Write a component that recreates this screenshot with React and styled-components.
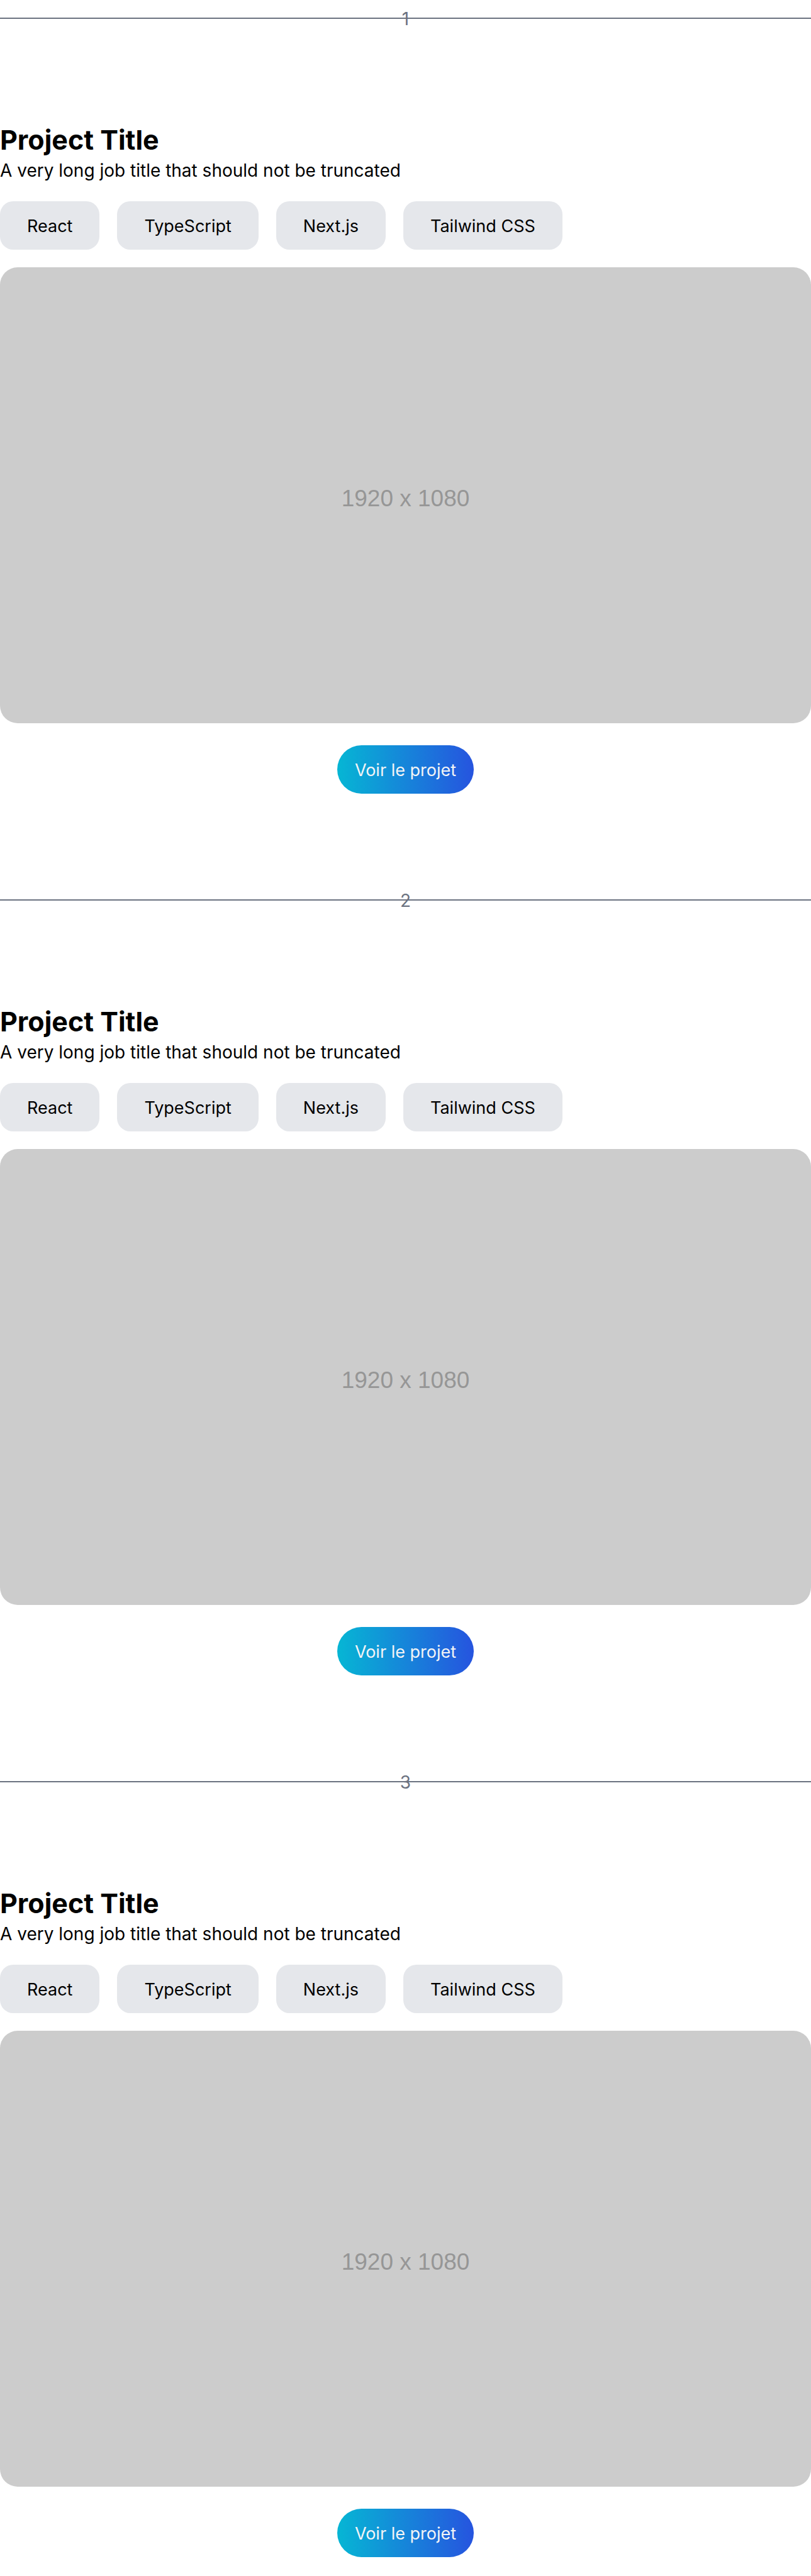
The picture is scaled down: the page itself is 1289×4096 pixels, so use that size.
import React from 'react';
import styled, { createGlobalStyle } from 'styled-components';

const GlobalStyle = createGlobalStyle`
  *, *::before, *::after { box-sizing: border-box; }
  body {
    margin: 0;
    background: #fff;
    color: #000;
    font-family: Inter, "Liberation Sans", sans-serif;
    font-size: 28px;
    line-height: 42px;
  }
`;

const Page = styled.main`
  display: flex;
  flex-direction: column;
  gap: 147px;
  padding: 7px 0 30px;
`;

const Section = styled.section`
  display: flex;
  flex-direction: column;
  gap: 143px;
`;

const Divider = styled.div`
  display: grid;
  align-items: center;
  justify-items: center;
  color: #6b7280;

  > * { grid-area: 1 / 1; }
`;

const Rule = styled.hr`
  width: 100%;
  margin: 0;
  border: 0;
  border-top: 2px solid #6b7280;
`;

const SectionNumber = styled.span`
  padding-top: 2px;
`;

const Project = styled.article`
  display: flex;
  flex-direction: column;
  gap: 28px;
`;

const Title = styled.h2`
  margin: 0;
  font-size: 43px;
  line-height: 56px;
  font-weight: 700;
`;

const Job = styled.p`
  margin: 0;
`;

const Tags = styled.ul`
  display: flex;
  flex-wrap: wrap;
  gap: 28px;
  margin: 0;
  padding: 0;
  list-style: none;
`;

const Tag = styled.li`
  padding: 19px 43px 16px;
  border-radius: 21px;
  background: #e5e7eb;
  font-size: 27px;
`;

const Cover = styled.div`
  display: flex;
  align-items: center;
  justify-content: center;
  aspect-ratio: 16 / 9;
  padding-top: 10px;
  border-radius: 28px;
  background: #ccc;
  color: #969696;
  font-family: "Liberation Sans", Arial, sans-serif;
  font-size: 37px;
`;

const ProjectLink = styled.a`
  align-self: center;
  margin-top: 7px;
  padding: 19px 28px 16px;
  border-radius: 39px;
  background: linear-gradient(to right, #06b6d4, #2654df);
  color: #f3f4f6;
  font-size: 27px;
  text-decoration: none;
`;

const tags = ['React', 'TypeScript', 'Next.js', 'Tailwind CSS'];

function ProjectSection({ number }) {
  return (
    <Section>
      <Divider>
        <Rule />
        <SectionNumber>{number}</SectionNumber>
      </Divider>
      <Project>
        <header>
          <Title>Project Title</Title>
          <Job>A very long job title that should not be truncated</Job>
        </header>
        <Tags>
          {tags.map((tag) => (
            <Tag key={tag}>{tag}</Tag>
          ))}
        </Tags>
        <Cover>1920 x 1080</Cover>
        <ProjectLink href="#">Voir le projet</ProjectLink>
      </Project>
    </Section>
  );
}

export default function App() {
  return (
    <>
      <GlobalStyle />
      <Page>
        {[1, 2, 3].map((number) => (
          <ProjectSection key={number} number={number} />
        ))}
      </Page>
    </>
  );
}
